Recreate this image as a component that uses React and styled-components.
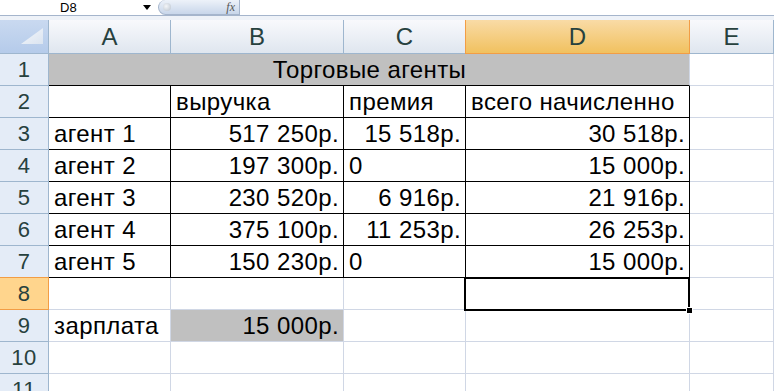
import React from 'react';
import styled, { createGlobalStyle, css } from 'styled-components';

const GlobalStyle = createGlobalStyle`
  html, body {
    margin: 0;
    padding: 0;
    background: #fff;
    overflow: hidden;
  }
  body {
    font-family: "Liberation Sans", Arial, sans-serif;
  }
`;

const Page = styled.div`
  width: 774px;
  height: 391px;
  overflow: hidden;
  background: #fff;
`;

const FormulaBar = styled.div`
  height: 15px;
  display: flex;
  align-items: center;
  background: #fff;
  border-bottom: 1px solid #a5b5cc;
`;

const NameBox = styled.div`
  width: 136px;
  padding-left: 60px;
  box-sizing: border-box;
  font-size: 13px;
  color: #000;
  line-height: 15px;
`;

const DropArrow = styled.div`
  width: 0;
  height: 0;
  border-left: 4px solid transparent;
  border-right: 4px solid transparent;
  border-top: 5px solid #000;
  margin: 0 7px 0 7px;
`;

const FxPill = styled.div`
  width: 82px;
  height: 15px;
  box-sizing: border-box;
  border: 1px solid #a5b5cc;
  border-top: none;
  border-radius: 8px 0 0 8px;
  background: linear-gradient(#edf2f9, #c8d6ea);
  display: flex;
  align-items: center;
  justify-content: space-between;
  padding: 0 4px;
`;

const Knob = styled.div`
  width: 8px;
  height: 8px;
  border-radius: 50%;
  background: radial-gradient(circle at 40% 40%, #f4f6f9, #b9c2cd);
`;

const Fx = styled.span`
  font-family: "Liberation Serif", "Times New Roman", serif;
  font-style: italic;
  font-size: 12px;
  color: #555;
`;

const Gap = styled.div`
  height: 4px;
  background: #eef2f8;
`;

const Sheet = styled.div`
  display: grid;
  grid-template-columns: 49px 122px 173px 122px 224px 1fr;
  grid-template-rows: 34px repeat(11, 32px);
  font-size: 24px;
  letter-spacing: 0.4px;
  color: #000;
`;

const ColHead = styled.div`
  box-sizing: border-box;
  display: flex;
  align-items: center;
  justify-content: center;
  border-right: 1px solid #9eb6ce;
  border-bottom: 1px solid #9eb6ce;
  background: linear-gradient(#f8f9fc, #dfe6ef);
  color: #27413e;
  font-size: 24px;
  letter-spacing: 0;
  ${(p) =>
    p.$active &&
    css`
      background: linear-gradient(#f9dba6, #f1c15f);
      border-right-color: #f29d45;
      border-bottom-color: #f29d45;
      border-left: 1px solid #f29d45;
      margin-left: -1px;
    `}
`;

const Corner = styled.div`
  position: relative;
  box-sizing: border-box;
  border-right: 1px solid #9eb6ce;
  border-bottom: 1px solid #9eb6ce;
  background: linear-gradient(#c9d9f0, #b5cbea);
`;

const CornerMark = styled.svg`
  position: absolute;
  right: 5px;
  bottom: 9px;
`;

const RowHead = styled.div`
  box-sizing: border-box;
  display: flex;
  align-items: center;
  justify-content: center;
  border-right: 1px solid #9eb6ce;
  border-bottom: 1px solid #9eb6ce;
  background: #e4ecf7;
  color: #27413e;
  font-size: 22px;
  letter-spacing: 0.5px;
  ${(p) =>
    p.$active &&
    css`
      background: #ffd58d;
      border-right-color: #f29d45;
      border-bottom-color: #f29d45;
      border-top: 1px solid #f29d45;
      margin-top: -1px;
    `}
`;

const Cell = styled.div`
  position: relative;
  box-sizing: border-box;
  display: flex;
  align-items: center;
  padding: 0 4px 0 5px;
  white-space: nowrap;
  border-right: 1px solid ${(p) => (p.$ruled ? '#000' : '#d0d7e5')};
  border-bottom: 1px solid ${(p) => (p.$ruled || p.$ruledBottom ? '#000' : '#d0d7e5')};
  justify-content: ${(p) =>
    p.$align === 'right' ? 'flex-end' : p.$align === 'center' ? 'center' : 'flex-start'};
  background: ${(p) => (p.$grey ? '#c0c0c0' : '#fff')};
  grid-column: ${(p) => (p.$span ? `span ${p.$span}` : 'auto')};
`;

const Selection = styled.div`
  position: absolute;
  left: -2px;
  top: -1px;
  right: -1px;
  bottom: -2px;
  border: 2px solid #000;
  pointer-events: none;
  z-index: 1;
`;

const FillHandle = styled.div`
  position: absolute;
  right: -4px;
  bottom: -4px;
  width: 5px;
  height: 5px;
  background: #000;
  outline: 1px solid #fff;
`;

const columns = ['A', 'B', 'C', 'D', 'E'];

const agents = [
  ['агент 1', '517 250р.', '15 518р.', '30 518р.'],
  ['агент 2', '197 300р.', '0', '15 000р.'],
  ['агент 3', '230 520р.', '6 916р.', '21 916р.'],
  ['агент 4', '375 100р.', '11 253р.', '26 253р.'],
  ['агент 5', '150 230р.', '0', '15 000р.'],
];

const App = () => (
  <Page>
    <GlobalStyle />
    <FormulaBar>
      <NameBox>D8</NameBox>
      <DropArrow />
      <FxPill>
        <Knob />
        <Fx>fx</Fx>
      </FxPill>
    </FormulaBar>
    <Gap />
    <Sheet>
      <Corner>
        <CornerMark width="22" height="16" viewBox="0 0 22 16">
          <defs>
            <linearGradient id="cm" x1="0" y1="0" x2="1" y2="1">
              <stop offset="0" stopColor="#f4f7fb" />
              <stop offset="1" stopColor="#dbe4f0" />
            </linearGradient>
          </defs>
          <polygon points="22,0 22,16 0,16" fill="url(#cm)" />
        </CornerMark>
      </Corner>
      {columns.map((c) => (
        <ColHead key={c} $active={c === 'D'}>
          {c}
        </ColHead>
      ))}

      <RowHead>1</RowHead>
      <Cell $span={4} $grey $ruledBottom $align="center">
        Торговые агенты
      </Cell>
      <Cell />

      <RowHead>2</RowHead>
      <Cell $ruled />
      <Cell $ruled>выручка</Cell>
      <Cell $ruled>премия</Cell>
      <Cell $ruled>всего начисленно</Cell>
      <Cell />

      {agents.map((row, i) => (
        <React.Fragment key={row[0]}>
          <RowHead>{i + 3}</RowHead>
          <Cell $ruled>{row[0]}</Cell>
          <Cell $ruled $align="right">{row[1]}</Cell>
          <Cell $ruled $align={row[2] === '0' ? 'left' : 'right'}>{row[2]}</Cell>
          <Cell $ruled $align="right">{row[3]}</Cell>
          <Cell />
        </React.Fragment>
      ))}

      <RowHead $active>8</RowHead>
      <Cell />
      <Cell />
      <Cell />
      <Cell>
        <Selection>
          <FillHandle />
        </Selection>
      </Cell>
      <Cell />

      <RowHead>9</RowHead>
      <Cell>зарплата</Cell>
      <Cell $grey $align="right">15 000р.</Cell>
      <Cell />
      <Cell />
      <Cell />

      {[10, 11, 12].map((n) => (
        <React.Fragment key={n}>
          <RowHead>{n}</RowHead>
          <Cell />
          <Cell />
          <Cell />
          <Cell />
          <Cell />
        </React.Fragment>
      ))}
    </Sheet>
  </Page>
);

export default App;
